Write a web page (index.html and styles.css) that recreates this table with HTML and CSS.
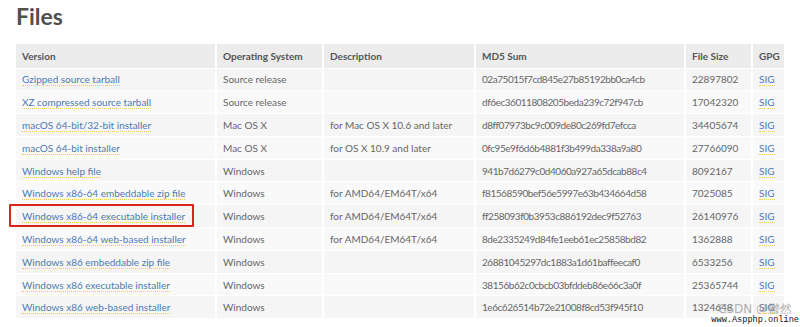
FILE: index.html
```html
<!DOCTYPE html>
<html lang="en">
<head>
    <meta charset="UTF-8">
    <title>Files</title>
    <link rel="stylesheet" href="styles.css">
</head>
<body>
    <div class="page">
        <h1>Files</h1>
        <table class="files">
            <thead>
                <tr>
                    <th class="c-version">Version</th>
                    <th class="c-os">Operating System</th>
                    <th class="c-desc">Description</th>
                    <th class="c-md5">MD5 Sum</th>
                    <th class="c-size">File Size</th>
                    <th class="c-gpg">GPG</th>
                </tr>
            </thead>
            <tbody>
                <tr>
                    <td><a href="#">Gzipped source tarball</a></td>
                    <td>Source release</td>
                    <td></td>
                    <td class="md5">02a75015f7cd845e27b85192bb0ca4cb</td>
                    <td>22897802</td>
                    <td><a href="#">SIG</a></td>
                </tr>
                <tr>
                    <td><a href="#">XZ compressed source tarball</a></td>
                    <td>Source release</td>
                    <td></td>
                    <td class="md5">df6ec36011808205beda239c72f947cb</td>
                    <td>17042320</td>
                    <td><a href="#">SIG</a></td>
                </tr>
                <tr>
                    <td><a href="#">macOS 64-bit/32-bit installer</a></td>
                    <td>Mac OS X</td>
                    <td>for Mac OS X 10.6 and later</td>
                    <td class="md5">d8ff07973bc9c009de80c269fd7efcca</td>
                    <td>34405674</td>
                    <td><a href="#">SIG</a></td>
                </tr>
                <tr>
                    <td><a href="#">macOS 64-bit installer</a></td>
                    <td>Mac OS X</td>
                    <td>for OS X 10.9 and later</td>
                    <td class="md5">0fc95e9f6d6b4881f3b499da338a9a80</td>
                    <td>27766090</td>
                    <td><a href="#">SIG</a></td>
                </tr>
                <tr>
                    <td><a href="#">Windows help file</a></td>
                    <td>Windows</td>
                    <td></td>
                    <td class="md5">941b7d6279c0d4060a927a65dcab88c4</td>
                    <td>8092167</td>
                    <td><a href="#">SIG</a></td>
                </tr>
                <tr>
                    <td><a href="#">Windows x86-64 embeddable zip file</a></td>
                    <td>Windows</td>
                    <td>for AMD64/EM64T/x64</td>
                    <td class="md5">f81568590bef56e5997e63b434664d58</td>
                    <td>7025085</td>
                    <td><a href="#">SIG</a></td>
                </tr>
                <tr>
                    <td class="highlight"><a href="#" class="marked">Windows x86-64 executable installer</a></td>
                    <td>Windows</td>
                    <td>for AMD64/EM64T/x64</td>
                    <td class="md5">ff258093f0b3953c886192dec9f52763</td>
                    <td>26140976</td>
                    <td><a href="#">SIG</a></td>
                </tr>
                <tr>
                    <td><a href="#">Windows x86-64 web-based installer</a></td>
                    <td>Windows</td>
                    <td>for AMD64/EM64T/x64</td>
                    <td class="md5">8de2335249d84fe1eeb61ec25858bd82</td>
                    <td>1362888</td>
                    <td><a href="#">SIG</a></td>
                </tr>
                <tr>
                    <td><a href="#">Windows x86 embeddable zip file</a></td>
                    <td>Windows</td>
                    <td></td>
                    <td class="md5">26881045297dc1883a1d61baffeecaf0</td>
                    <td>6533256</td>
                    <td><a href="#">SIG</a></td>
                </tr>
                <tr>
                    <td><a href="#">Windows x86 executable installer</a></td>
                    <td>Windows</td>
                    <td></td>
                    <td class="md5">38156b62c0cbcb03bfddeb86e66c3a0f</td>
                    <td>25365744</td>
                    <td><a href="#">SIG</a></td>
                </tr>
                <tr>
                    <td><a href="#">Windows x86 web-based installer</a></td>
                    <td>Windows</td>
                    <td></td>
                    <td class="md5">1e6c626514b72e21008f8cd53f945f10</td>
                    <td>1324648</td>
                    <td><a href="#">SIG</a></td>
                </tr>
            </tbody>
        </table>
    </div>

    <div class="watermark">
        <span class="csdn">CSDN @鬱然</span>
        <span class="site">www.Aspphp.online</span>
    </div>
</body>
</html>
```

FILE: styles.css
```css
body {
    margin: 0;
    background: #ffffff;
    font-family: Lato, "Noto Sans", sans-serif;
    color: #666666;
}

.page {
    padding: 0 15px 0 16px;
}

h1 {
    margin: 0;
    height: 44px;
    font-size: 23px;
    font-weight: 700;
    color: #505050;
    line-height: 32px;
}

.files {
    width: 769px;
    border-collapse: collapse;
    font-size: 10px;
    table-layout: fixed;
}

.files th,
.files td {
    box-sizing: border-box;
    height: 22.8px;
    padding: 0 0 0 6px;
    text-align: left;
    border-right: 2px solid #ffffff;
    border-bottom: 1px solid #ffffff;
    white-space: nowrap;
    overflow: hidden;
}

.files th {
    background: #ececec;
    font-weight: 700;
    color: #555555;
    height: 24px;
}

.files tbody tr {
    background: #f5f5f5;
}

.files tbody tr:nth-child(even) {
    background: #f9f9f9;
}

.c-version { width: 200px; }
.c-os { width: 107px; }
.c-desc { width: 152px; }
.c-md5 { width: 210px; }
.c-size { width: 67px; }
.c-gpg { width: 33px; }

.files td.md5 {
    letter-spacing: -0.45px;
}

.files a {
    color: #4c7bb0;
    text-decoration: none;
    border-bottom: 1px dotted #f2c94c;
}

.files td.highlight {
    overflow: visible;
}

.files a.marked {
    position: relative;
}

.files a.marked::after {
    content: "";
    position: absolute;
    left: -13px;
    right: -9px;
    top: -6px;
    bottom: -5px;
    border: 2px solid #d8261c;
    border-radius: 1px;
}

.watermark {
    position: absolute;
    right: 0;
    bottom: 0;
    width: 120px;
    height: 30px;
}

.watermark .csdn {
    position: absolute;
    left: 38px;
    top: 4px;
    font-family: "DejaVu Sans", sans-serif;
    font-size: 12px;
    color: rgba(150, 150, 150, 0.75);
}

.watermark .site {
    position: absolute;
    right: 0;
    bottom: 0;
    background: #ffffff;
    padding: 1px 1px 2px 3px;
    font-family: "Liberation Mono", monospace;
    font-size: 8.6px;
    color: #111111;
}
```
